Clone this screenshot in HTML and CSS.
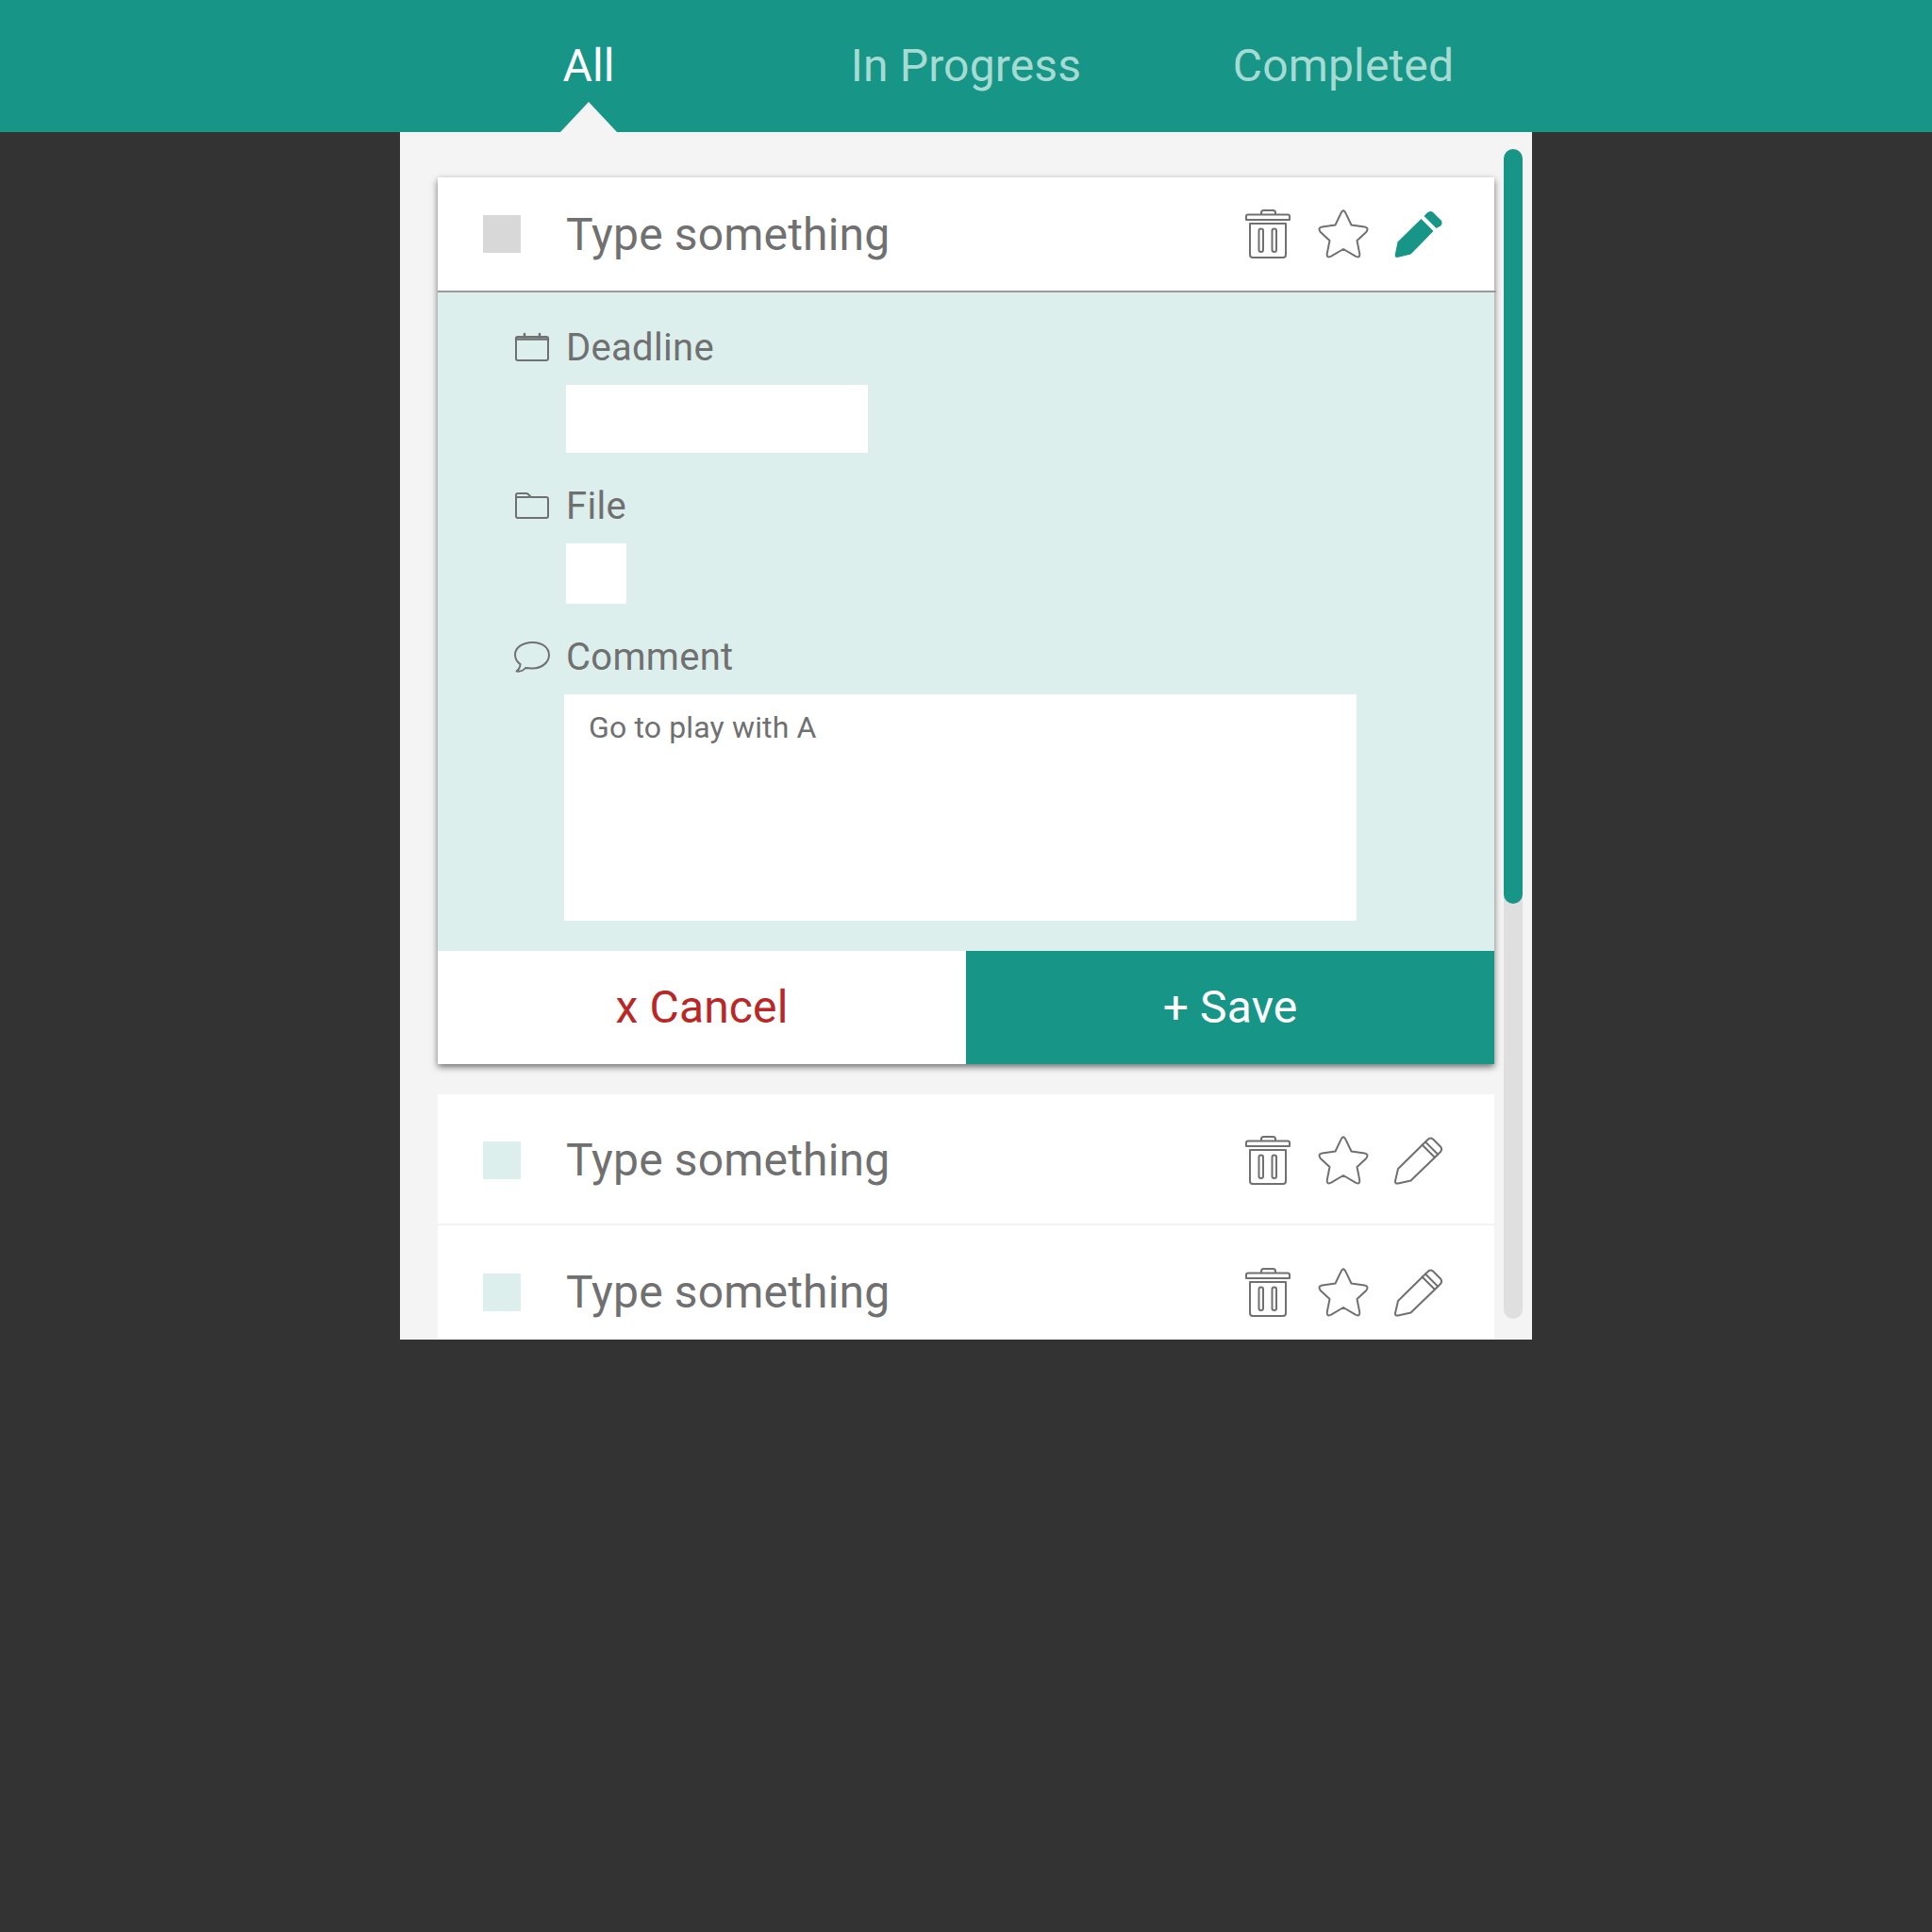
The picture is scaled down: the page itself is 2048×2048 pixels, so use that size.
FILE: index.html
```html
<!DOCTYPE html>
<html lang="en">
<head>
    <meta charset="utf-8">
    <title>Todo</title>
    <link rel="stylesheet" href="styles.css">
</head>
<body>
    <svg class="icon-defs" width="0" height="0">
        <symbol id="i-trash" viewBox="0 0 48 52">
            <path d="M17 5.500V3.500Q17 1 19.500 1H29.500Q32 1 32 3.500V5.500M3 5.500H45Q47 5.500 47 7.500V11H1V7.500Q1 5.500 3 5.500ZM5 15H43V48Q43 51 40 51H8Q5 51 5 48ZM14.500 22.500Q14.500 20.500 16.750 20.500Q19 20.500 19 22.500V43Q19 45 16.750 45Q14.500 45 14.500 43ZM28.500 22.500Q28.500 20.500 30.750 20.500Q33 20.500 33 22.500V43Q33 45 30.750 45Q28.500 45 28.500 43Z"/>
        </symbol>
        <symbol id="i-star" viewBox="0 0 52 50">
            <path d="M23.300 3.400Q26 -3 28.700 3.400L34.500 15.500L48.600 17.600Q53.500 18.500 50.250 22.900L40.500 32L43.200 45.600Q44 51 38.900 48.700L26 41L13.100 48.700Q8 51 8.800 45.600L11.500 32L1.750 22.900Q-1.500 18.500 3.400 17.600L17.500 15.500Z"/>
        </symbol>
        <symbol id="i-pencil" viewBox="0 0 52 52">
            <path d="M4 35L35 4.500Q38 1 41 3.500L49 11.500Q51.500 14.500 48.500 17.500L17.500 47.500L4 50.500Q.6 51 1 48Z"/>
            <path d="M29.500 9.500L42.500 22.500M33 6.500L46 19.500"/>
        </symbol>
        <symbol id="i-pencil-fill" viewBox="0 0 52 52">
            <path class="solid" d="M3.500 34.500L28.500 10L41.500 23L17.500 47.500L4 50.800Q.4 51.500 .8 48Z"/>
            <path class="solid" d="M31.500 7L35 3.500Q38 .6 41 3L49.500 11.500Q51.800 14.500 49 17.500L44.500 20Z"/>
        </symbol>
        <symbol id="i-calendar" viewBox="0 0 36 30">
            <path d="M2.500 4H33.500Q35 4 35 5.500V27Q35 29 33 29H3Q1 29 1 27V5.500Q1 4 2.500 4Z"/>
            <path class="thick" d="M1 6.500H35M10 1V4M26 1V4"/>
        </symbol>
        <symbol id="i-folder" viewBox="0 0 36 28">
            <path d="M1 5V25Q1 27 3 27H33Q35 27 35 25V7Q35 5 33 5H17L14 2Q13 1 11.500 1H3Q1 1 1 3ZM1 5H15"/>
        </symbol>
        <symbol id="i-bubble" viewBox="0 0 38 33">
            <path d="M19.500 1C9 1 1 6.500 1 14C1 18 3 21.500 6.500 24C6.500 27 4.500 30 2.500 31.500C6 32 10 30.500 12 28C14.500 28 17 28.500 19.500 28.500C30 28.500 37 21.500 37 14.500C37 6.500 30 1 19.500 1Z"/>
        </symbol>
    </svg>

    <nav class="tabs">
        <a class="tab tab-active">All</a>
        <a class="tab">In Progress</a>
        <a class="tab">Completed</a>
    </nav>

    <main class="panel">
        <section class="card">
            <div class="task task-open">
                <span class="check check-open"></span>
                <span class="task-title">Type something</span>
                <div class="task-icons">
                    <svg class="ic ic-trash"><use href="#i-trash"/></svg>
                    <svg class="ic ic-star"><use href="#i-star"/></svg>
                    <svg class="ic ic-pencil"><use href="#i-pencil-fill"/></svg>
                </div>
            </div>
            <div class="detail">
                <div class="field-label">
                    <span class="field-icon"><svg class="ic ic-calendar"><use href="#i-calendar"/></svg></span>
                    Deadline
                </div>
                <input class="deadline-input" type="text">
                <div class="field-label">
                    <span class="field-icon"><svg class="ic ic-folder"><use href="#i-folder"/></svg></span>
                    File
                </div>
                <div class="file-box"></div>
                <div class="field-label">
                    <span class="field-icon"><svg class="ic ic-bubble"><use href="#i-bubble"/></svg></span>
                    Comment
                </div>
                <textarea class="comment-input">Go to play with A</textarea>
            </div>
            <div class="actions">
                <button class="btn btn-cancel">x Cancel</button>
                <button class="btn btn-save">+ Save</button>
            </div>
        </section>

        <section class="list">
            <div class="task">
                <span class="check"></span>
                <span class="task-title">Type something</span>
                <div class="task-icons">
                    <svg class="ic ic-trash"><use href="#i-trash"/></svg>
                    <svg class="ic ic-star"><use href="#i-star"/></svg>
                    <svg class="ic ic-pencil"><use href="#i-pencil"/></svg>
                </div>
            </div>
            <div class="task">
                <span class="check"></span>
                <span class="task-title">Type something</span>
                <div class="task-icons">
                    <svg class="ic ic-trash"><use href="#i-trash"/></svg>
                    <svg class="ic ic-star"><use href="#i-star"/></svg>
                    <svg class="ic ic-pencil"><use href="#i-pencil"/></svg>
                </div>
            </div>
        </section>

        <div class="scrollbar"><div class="scrollbar-thumb"></div></div>
    </main>
</body>
</html>
```

FILE: styles.css
```css
body {
    margin: 0;
    height: 2048px;
    background: #333333;
    font-family: Roboto, "Liberation Sans", sans-serif;
    color: #707070;
}
.icon-defs {
    position: absolute;
}
.ic {
    display: block;
    overflow: visible;
    fill: none;
    stroke: #707070;
    stroke-width: 2;
    stroke-linejoin: round;
    stroke-linecap: round;
}
symbol {
    overflow: visible;
}
.solid {
    fill: #179587;
    stroke: none;
}
.thick {
    stroke-width: 2.5;
}

/* tabs */
.tabs {
    height: 140px;
    background: #179587;
    display: flex;
    justify-content: center;
}
.tab {
    position: relative;
    width: 400px;
    height: 140px;
    line-height: 140px;
    text-align: center;
    font-size: 48px;
    letter-spacing: 0.15px;
    color: #a6dbd4;
}
.tab-active {
    color: #ffffff;
}
.tab-active::after {
    content: "";
    position: absolute;
    left: 170px;
    bottom: 0;
    border-left: 30px solid transparent;
    border-right: 30px solid transparent;
    border-bottom: 32px solid #f4f4f4;
}

/* main panel */
.panel {
    position: relative;
    box-sizing: border-box;
    width: 1200px;
    height: 1280px;
    margin: 0 auto;
    padding: 48px 40px 0;
    background: #f4f4f4;
    overflow: hidden;
}
.card {
    background: #ffffff;
    box-shadow: 0 3px 7px rgba(0, 0, 0, 0.55);
}
.list {
    margin-top: 32px;
    background: #ffffff;
}

/* task row */
.task {
    display: flex;
    align-items: center;
    height: 139px;
    margin-bottom: 1px;
    padding: 3px 54px 0 48px;
    border-bottom: 2px solid #f2f2f2;
    box-sizing: border-box;
}
.task-open {
    height: 122px;
    margin: 0 -2px 0 0;
    padding: 0 56px 0 48px;
    border-bottom-color: #999999;
}
.check {
    width: 40px;
    height: 40px;
    margin-right: 48px;
    background: #ddefec;
}
.check-open {
    background: #d8d8d8;
}
.task-title {
    flex: 1;
    font-size: 48px;
    letter-spacing: 0.17px;
}
.list .task-title {
    padding-bottom: 2px;
}
.task-icons {
    display: flex;
    align-items: center;
}
.ic-trash {
    width: 48px;
    height: 52px;
}
.ic-star {
    width: 52px;
    height: 50px;
    margin-left: 30px;
}
.ic-pencil {
    width: 52px;
    height: 52px;
    margin-left: 28px;
}

/* expanded detail */
.detail {
    padding: 34px 0 32px;
    background: #ddefec;
}
.field-label {
    display: flex;
    align-items: center;
    height: 48px;
    margin: 32px 0 16px 82px;
    font-size: 40px;
    letter-spacing: 0.3px;
}
.detail .field-label:first-child {
    margin-top: 0;
}
.field-icon {
    width: 54px;
}
.ic-calendar {
    width: 36px;
    height: 30px;
}
.ic-folder {
    width: 36px;
    height: 28px;
}
.ic-bubble {
    width: 38px;
    height: 33px;
    margin-left: -1px;
}
.deadline-input {
    display: block;
    width: 320px;
    height: 72px;
    margin-left: 136px;
    padding: 0;
    border: none;
    background: #ffffff;
}
.file-box {
    width: 64px;
    height: 64px;
    margin-left: 136px;
    background: #ffffff;
}
.comment-input {
    display: block;
    box-sizing: border-box;
    width: 840px;
    height: 240px;
    margin-left: 134px;
    padding: 16px 26px;
    border: none;
    background: #ffffff;
    color: #707070;
    font-family: Roboto, "Liberation Sans", sans-serif;
    font-size: 32px;
    letter-spacing: 0.15px;
    resize: none;
}

/* cancel / save */
.actions {
    display: flex;
}
.btn {
    flex: 1;
    height: 120px;
    padding: 0 0 2px;
    border: none;
    font-family: Roboto, "Liberation Sans", sans-serif;
    font-size: 48px;
    letter-spacing: 0.15px;
}
.btn-cancel {
    background: #ffffff;
    color: #b92727;
}
.btn-save {
    background: #179587;
    color: #ffffff;
}

/* scrollbar */
.scrollbar {
    position: absolute;
    top: 18px;
    left: 1170px;
    width: 20px;
    height: 1240px;
    border-radius: 10px;
    background: #dfdfdf;
}
.scrollbar-thumb {
    height: 800px;
    border-radius: 10px;
    background: #179587;
}
```
